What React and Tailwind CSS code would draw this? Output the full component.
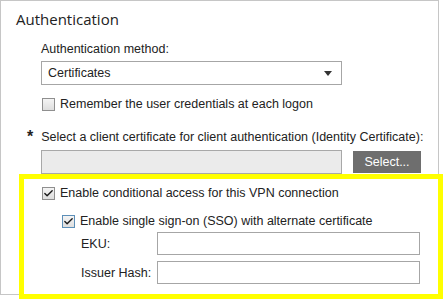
import { Check } from 'lucide-react'

const ui = { fontFamily: '"Liberation Sans", Arial, sans-serif' }

function Box({ checked, focus }) {
  return (
    <span
      className={`flex h-[13px] w-[13px] shrink-0 items-center justify-center border bg-gradient-to-b from-[#f4f4f4] to-[#dedede] ${focus ? 'border-[#5c8fb8]' : 'border-[#8f8f8f]'}`}
    >
      {checked && <Check size={11} strokeWidth={3} className="text-[#1a1a1a]" />}
    </span>
  )
}

export default function App() {
  return (
    <div className="h-[308px] w-[447px] overflow-hidden whitespace-nowrap bg-white text-[12.5px] leading-[14px] text-[#222]" style={ui}>
      <div className="h-[295px] w-[439px] border border-[#c6c6c6]">
        <h2 className="ml-[15px] mt-[8px] text-[15px] leading-[20px] text-[#222]" style={{ fontFamily: '"Open Sans", sans-serif' }}>
          Authentication
        </h2>

        <div className="ml-[40px] mt-[13px]">Authentication method:</div>
        <div className="ml-[40px] mt-[5px] flex h-[24px] w-[301px] items-center justify-between border border-[#a6a6a6] pl-[6px] pr-[9px]">
          <span>Certificates</span>
          <svg width="8" height="5" viewBox="0 0 8 5"><path d="M0 0h8L4 5z" fill="#333" /></svg>
        </div>

        <label className="ml-[41px] mt-[12px] flex items-center gap-[5px]">
          <Box />
          <span>Remember the user credentials at each logon</span>
        </label>

        <div className="mt-[19px] flex items-start">
          <span className="ml-[26px] mr-[8px] text-[16px] font-bold leading-[14px]">*</span>
          <span>Select a client certificate for client authentication (Identity Certificate):</span>
        </div>
        <div className="mt-[6px] flex items-center">
          <div className="ml-[40px] h-[24px] w-[301px] border border-[#a8a8a8] bg-[#ebebeb]" />
          <button className="ml-[11px] h-[22px] w-[68px] bg-[#6e6e6e] text-white">Select...</button>
        </div>

        <div className="-mr-[5px] ml-[18px] h-[125px] border-[5px] border-[#ffff00] bg-white">
          <label className="ml-[18px] mt-[7px] flex items-center gap-[5px]">
            <Box checked />
            <span>Enable conditional access for this VPN connection</span>
          </label>
          <label className="ml-[38px] mt-[14px] flex items-center gap-[5px]">
            <Box checked focus />
            <span>Enable single sign-on (SSO) with alternate certificate</span>
          </label>
          <div className="mt-[4px] flex items-center">
            <span className="ml-[57px] w-[76px]">EKU:</span>
            <div className="h-[23px] w-[263px] border border-[#a6a6a6]" />
          </div>
          <div className="mt-[6px] flex items-center">
            <span className="ml-[57px] w-[76px]">Issuer Hash:</span>
            <div className="h-[23px] w-[263px] border border-[#a6a6a6]" />
          </div>
        </div>
      </div>
    </div>
  )
}
